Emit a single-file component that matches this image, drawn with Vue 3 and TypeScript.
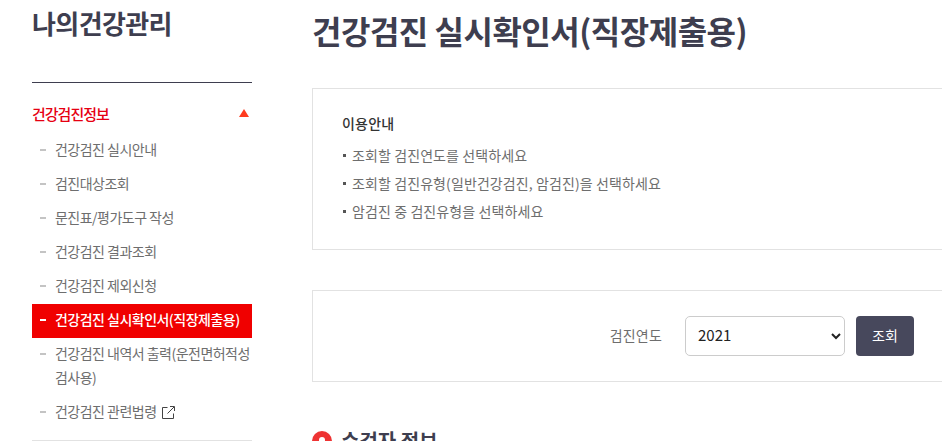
<template>
  <div class="page">
    <!-- 왼쪽 메뉴 -->
    <aside class="side">
      <h2 class="side-title">나의건강관리</h2>
      <div class="side-group">
        <span>건강검진정보</span>
        <i class="arrow" />
      </div>
      <ul class="menu">
        <li v-for="item in menuItems" :key="item.label" :class="{ active: item.active }">
          <span class="dash" />
          <a class="menu-text">
            {{ item.label }}
            <svg v-if="item.external" class="ext" width="13" height="13" viewBox="0 0 13 13" fill="none" stroke="#444" stroke-width="1">
              <path d="M5.500 1.500H.5v11h11V7.500" />
              <path d="M5.500 7.500 12 1M8 .5h4.500V5" />
            </svg>
          </a>
        </li>
      </ul>
    </aside>

    <!-- 본문 -->
    <main class="main">
      <h1 class="title">건강검진 실시확인서(직장제출용)</h1>

      <section class="guide">
        <h4 class="guide-title">이용안내</h4>
        <ul class="guide-list">
          <li v-for="line in guideLines" :key="line">{{ line }}</li>
        </ul>
      </section>

      <section class="search">
        <label class="search-label" for="year">검진연도</label>
        <select id="year" class="search-select">
          <option v-for="year in years" :key="year">{{ year }}</option>
        </select>
        <button class="search-btn">조회</button>
      </section>

      <h3 class="sub-title">
        <span class="sub-icon" />
        수검자 정보
      </h3>
    </main>
  </div>
</template>

<script setup lang="ts">
interface MenuItem {
  label: string
  active?: boolean
  external?: boolean
}

const menuItems: MenuItem[] = [
  { label: '건강검진 실시안내' },
  { label: '검진대상조회' },
  { label: '문진표/평가도구 작성' },
  { label: '건강검진 결과조회' },
  { label: '건강검진 제외신청' },
  { label: '건강검진 실시확인서(직장제출용)', active: true },
  { label: '건강검진 내역서 출력(운전면허적성검사용)' },
  { label: '건강검진 관련법령', external: true }
]

const guideLines = [
  '조회할 검진연도를 선택하세요',
  '조회할 검진유형(일반건강검진, 암검진)을 선택하세요',
  '암검진 중 검진유형을 선택하세요'
]

const years = ['2021', '2020', '2019']
</script>

<style>
html,
body {
  margin: 0;
  overflow: hidden;
  background: #fff;
}
</style>

<style scoped>
.page {
  display: flex;
  width: 942px;
  height: 441px;
  overflow: hidden;
  font-family: "Noto Sans CJK KR", "Noto Sans", sans-serif;
  color: #3e3e4f;
}

/* 왼쪽 메뉴 */
.side {
  flex: none;
  width: 220px;
  margin-left: 32px;
}

.side-title {
  margin: 0;
  height: 83px;
  box-sizing: border-box;
  padding-top: 4px;
  font-size: 26px;
  line-height: 38px;
  font-weight: 700;
  letter-spacing: -0.6px;
  border-bottom: 1px solid #3e3e4f;
}

.side-group {
  display: flex;
  align-items: center;
  justify-content: space-between;
  height: 51px;
  box-sizing: border-box;
  padding: 9px 3px 0 0;
  font-size: 15px;
  font-weight: 500;
  letter-spacing: -1px;
  color: #e60012;
}

.arrow {
  width: 0;
  height: 0;
  border-left: 5px solid transparent;
  border-right: 5px solid transparent;
  border-bottom: 8px solid #ff3b1f;
}

.menu {
  list-style: none;
  margin: 0;
  padding: 0 0 10px;
  border-bottom: 1px solid #e2e2e2;
}

.menu li {
  display: flex;
  padding: 3px 0 7px 8px;
  font-size: 14px;
  line-height: 24px;
  letter-spacing: -0.52px;
  color: #6e6e6e;
}

.menu li.active {
  background: #f00000;
  color: #fff;
  font-weight: 500;
}

.dash {
  flex: none;
  width: 6px;
  height: 2px;
  margin: 12px 9px 0 0;
  background: #c4c4c4;
}

.active .dash {
  background: #fff;
}

.ext {
  margin-left: 3px;
  vertical-align: -2px;
}

/* 본문 */
.main {
  flex: none;
  width: 720px;
  margin-left: 60px;
}

.title {
  margin: 0;
  height: 88px;
  padding-top: 8px;
  box-sizing: border-box;
  font-size: 32px;
  line-height: 44px;
  font-weight: 700;
  letter-spacing: -0.5px;
}

.guide {
  height: 162px;
  box-sizing: border-box;
  padding: 23px 29px;
  border: 1px solid #e2e2e2;
}

.guide-title {
  margin: 0 0 7px;
  font-size: 14px;
  line-height: 22px;
  font-weight: 500;
  letter-spacing: 0.2px;
  color: #333;
}

.guide-list {
  list-style: none;
  margin: 0;
  padding: 0;
}

.guide-list li {
  position: relative;
  padding-left: 10px;
  font-size: 14px;
  line-height: 28px;
  letter-spacing: 0.1px;
  color: #6e6e6e;
}

.guide-list li::before {
  content: "";
  position: absolute;
  left: 1px;
  top: 13px;
  width: 3px;
  height: 3px;
  background: #555;
}

.search {
  display: flex;
  align-items: center;
  justify-content: flex-end;
  height: 92px;
  box-sizing: border-box;
  margin-top: 40px;
  padding-right: 117px;
  border: 1px solid #e2e2e2;
}

.search-label {
  margin: 0 23px 2px 0;
  font-size: 14px;
  letter-spacing: 0.2px;
  color: #6e6e6e;
}

.search-select {
  width: 160px;
  height: 40px;
  padding: 0 8px 4px;
  background: #fff;
  border: 1px solid #ccc;
  border-radius: 5px;
  font-family: "Noto Sans CJK KR", sans-serif;
  font-size: 15px;
  color: #222;
}

.search-btn {
  width: 58px;
  height: 40px;
  margin-left: 11px;
  padding: 0 0 2px;
  border: none;
  border-radius: 4px;
  background: #47485c;
  color: #fff;
  font-family: inherit;
  font-size: 14px;
}

.sub-title {
  display: flex;
  align-items: center;
  gap: 9px;
  margin: 44px 0 0;
  font-size: 20px;
  line-height: 30px;
  font-weight: 700;
}

.sub-icon {
  position: relative;
  flex: none;
  width: 20px;
  height: 20px;
  border-radius: 50%;
  background: #ee3333;
}

.sub-icon::after {
  content: "";
  position: absolute;
  left: 7px;
  top: 6px;
  width: 6px;
  height: 6px;
  border-radius: 50%;
  background: #fff;
}
</style>
